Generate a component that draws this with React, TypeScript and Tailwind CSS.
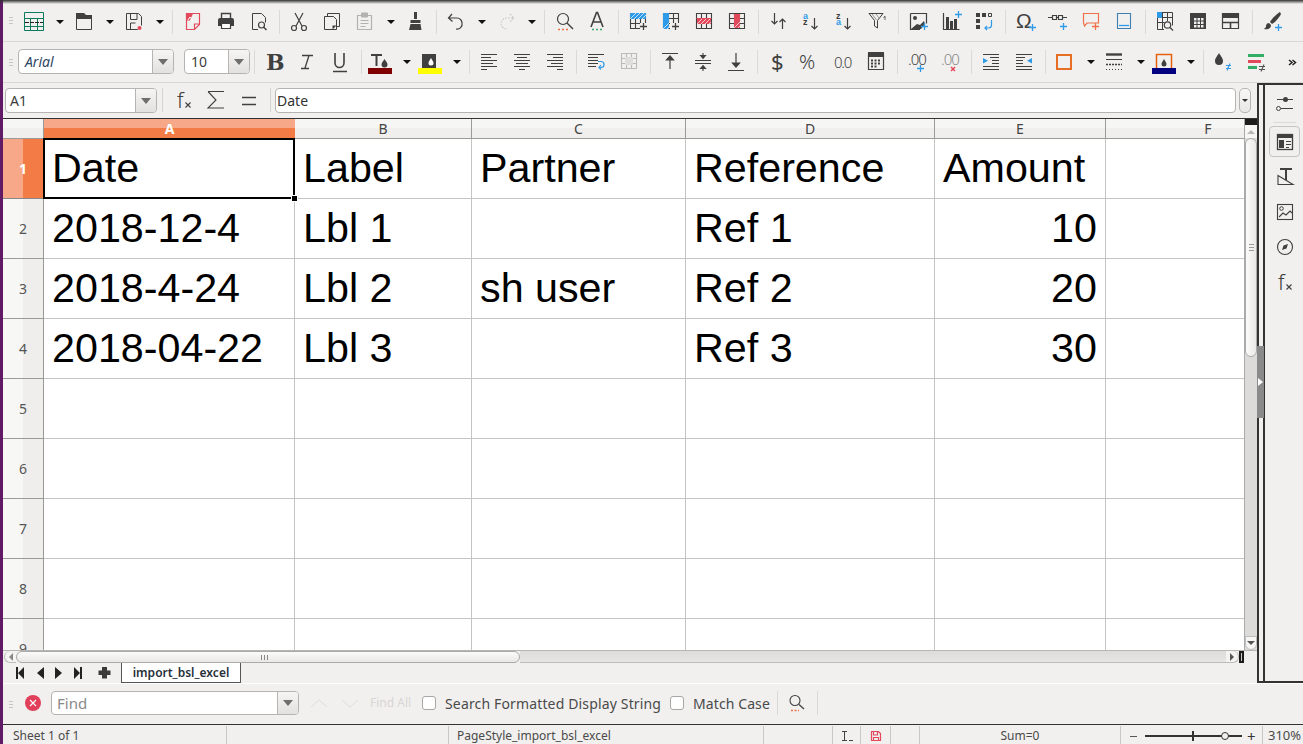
import React from "react";

const D = "#404040";
const BL = "#2f9ae8";
const RD = "#e2495a";
const OR = "#f0704a";

function Svg({ children, size = 24 }: { children: React.ReactNode; size?: number }) {
  return (
    <svg width={size} height={size} viewBox={`0 0 ${size} ${size}`} fill="none" stroke={D} strokeWidth="1" overflow="visible">
      {children}
    </svg>
  );
}

const Plus = ({ x, y, c = BL, r = 3 }: { x: number; y: number; c?: string; r?: number }) => (
  <path d={`M${x - r} ${y + 0.5}h${r * 2 + 1}M${x + 0.5} ${y - r}v${r * 2 + 1}`} stroke={c} strokeWidth="1.3" />
);

const Hatch = ({ x, y, w, h, c }: { x: number; y: number; w: number; h: number; c: string }) => {
  const n = Math.ceil((w + h) / 4);
  return (
    <svg x={x} y={y} width={w} height={h} viewBox={`0 0 ${w} ${h}`}>
      <rect width={w} height={h} fill={c} stroke="none" />
      {Array.from({ length: n }).map((_, i) => (
        <path key={i} d={`M${i * 4} ${h}l${h} ${-h}`} stroke="#fff" strokeWidth="1" opacity="0.7" />
      ))}
    </svg>
  );
};

const Cells = () => <path d="M3.5 3.5h15v15h-15zM3.5 8.5h15M3.5 13.5h15M8.5 3.5v15M13.5 3.5v15" stroke={D} strokeWidth="1.1" />;

const freezeCells = [
  [9, 8], [12.5, 8], [16, 8],
  [9, 11.5], [12.5, 11.5], [16, 11.5],
  [9, 15], [12.5, 15], [16, 15],
];

const icons: Record<string, React.ReactNode> = {
  new: (
    <g stroke="#0b7a5e" transform="translate(-1 0)">
      <path d="M2.5 2.5h19v18h-19zM2.5 8.5h19M2.5 16.5h19M8.5 8.5v12M15.5 8.5v12" />
      <path d="M3 12.5h18" stroke="#222" strokeDasharray="4 1" />
    </g>
  ),
  open: (
    <g transform="translate(-1 0)">
      <path d="M4.5 4.5v15h15V8.5" />
      <path d="M4 3h8l2 2h6v4H4z" fill={D} stroke="none" />
    </g>
  ),
  save: (
    <g transform="translate(-1 0)">
      <path d="M4.5 3.5h12l3 3v9M15.5 19.5h-11zM4.5 3.5v16" />
      <path d="M8.5 4v5.5h6.5V4M8.5 19v-6h5" />
      <circle cx="17.5" cy="18" r="2" fill={RD} stroke="none" />
    </g>
  ),
  pdf: (
    <g stroke={RD} transform="translate(-1 0)">
      <path d="M6.5 3.5h13v11l-5 5h-8zM14.5 19v-5h5" strokeWidth="1.2" />
      <path d="M7 3.5h6l-3 7H7z" fill={RD} stroke="none" />
      <path d="M8 10l2-3 3 4" stroke="#fff" />
    </g>
  ),
  print: (
    <g>
      <path d="M7.5 8V3.5h9V8" strokeWidth="1.4" />
      <path d="M6 8h12a2 2 0 0 1 2 2v6h-3v-3H7v3H4v-6a2 2 0 0 1 2-2z" fill={D} stroke="none" />
      <path d="M7.5 13.5h9v5h-9z" fill="#fff" strokeWidth="1.2" />
    </g>
  ),
  preview: (
    <g>
      <path d="M5.5 3.5h9l4 4v5M11 19.5H5.5v-16" />
      <circle cx="14.5" cy="15" r="3" strokeWidth="1.2" />
      <path d="M16.5 17l3 3" strokeWidth="1.4" />
    </g>
  ),
  cut: (
    <g strokeWidth="1.2" transform="translate(-1 0)">
      <path d="M8 3l7 13M16 3l-7 13" />
      <circle cx="7" cy="18" r="2.5" />
      <circle cx="17" cy="18" r="2.5" />
    </g>
  ),
  copy: (
    <g transform="translate(-1 0)">
      <path d="M7.5 6V3.5h12v13H17" />
      <path d="M4.5 6.5h9l3 3v10h-12z" fill="#f1f0ef" />
      <path d="M12.5 19.5l4-4h-4z" fill={D} stroke="none" />
    </g>
  ),
  paste: (
    <g stroke="#b4b2b0">
      <path d="M3.5 5.5h14v14h-14z" strokeWidth="1.2" />
      <path d="M7.5 3h6v4h-6z" fill="#b4b2b0" />
      <path d="M6.5 10.5h8M6.5 13.5h8M6.5 16.5h5" />
    </g>
  ),
  clone: (
    <g>
      <path d="M10 2h3v7h-3z" fill={D} stroke="none" />
      <path d="M6.5 10h10v3h-10z" fill={D} stroke="none" />
      <path d="M6.5 14h10l1 6H5z" fill={D} stroke="none" />
    </g>
  ),
  undo: <path d="M7 4L3.5 8l4 3.5M4 8h8a5 5 0 0 1 5 5 5 5 0 0 1-6 6" strokeWidth="1.2" />,
  redo: <path d="M15 4l4 4-4 3.5M18 8h-7a6 6 0 0 0-5 6 6 6 0 0 0 6 5" stroke="#cfcdcb" strokeWidth="1.2" strokeDasharray="2 1" />,
  find: (
    <g>
      <circle cx="10" cy="9" r="5.5" strokeWidth="1.2" />
      <path d="M14 13l6 6" strokeWidth="1.4" />
      <path d="M5 19.5h10" stroke={OR} strokeWidth="1.5" strokeDasharray="2 2" />
    </g>
  ),
  spell: (
    <g>
      <path d="M5 17L10.5 2.5h1L17 17M7 12h8" strokeWidth="1.6" />
      <path d="M6 19.5h10" stroke="#3aa76d" strokeWidth="1.6" strokeDasharray="2 2" />
    </g>
  ),
  rowIns: (
    <g>
      <Cells />
      <Hatch x={3} y={3} w={16} h={6} c={BL} />
      <path d="M13 13h7v7h-7z" fill="#f1f0ef" stroke="none" />
      <Plus x={16} y={16} c={D} />
    </g>
  ),
  colIns: (
    <g>
      <Cells />
      <Hatch x={3} y={3} w={6} h={16} c={BL} />
      <path d="M10 13h10v7H10z" fill="#f1f0ef" stroke="none" />
      <Plus x={15} y={16} c={D} />
    </g>
  ),
  rowDel: (
    <g>
      <Cells />
      <Hatch x={4} y={8} w={14} h={6} c={RD} />
      <path d="M3.5 8.5h15" stroke={RD} />
    </g>
  ),
  colDel: (
    <g>
      <Cells />
      <Hatch x={8} y={4} w={6} h={14} c={RD} />
    </g>
  ),
  sort: (
    <g strokeWidth="1.2">
      <path d="M7.5 3v11M4.5 11l3 3 3-3" />
      <path d="M15.5 19V9M12.5 12l3-3 3 3" />
    </g>
  ),
  asc: (
    <g>
      <text x="3" y="8.5" fontSize="9" fontWeight="700" fill={BL} stroke="none" fontFamily="Liberation Sans">a</text>
      <text x="3" y="15" fontSize="9" fontWeight="700" fill={D} stroke="none" fontFamily="Liberation Sans">z</text>
      <path d="M14.5 8v11M11.5 16l3 3 3-3" strokeWidth="1.2" />
    </g>
  ),
  desc: (
    <g>
      <text x="3" y="8.5" fontSize="9" fontWeight="700" fill={D} stroke="none" fontFamily="Liberation Sans">z</text>
      <text x="3" y="15" fontSize="9" fontWeight="700" fill={BL} stroke="none" fontFamily="Liberation Sans">a</text>
      <path d="M14.5 8v11M11.5 16l3 3 3-3" strokeWidth="1.2" />
    </g>
  ),
  filter: (
    <g>
      <path d="M3 3.5h14l-5.5 7V18l-3-2v-5.5z" />
      <path d="M6 4l4.5 6M10 4l3.5 4.5" stroke="#999" />
      <path d="M19 6v4M17.5 8L19 6" stroke="#666" />
    </g>
  ),
  image: (
    <g>
      <path d="M3.5 3.5h16v10M13 19.5H3.5v-16" strokeWidth="1.2" />
      <circle cx="8" cy="8" r="2" fill={D} stroke="none" />
      <path d="M4 19l6-5 3 1 4-4 1 3-4 5z" fill={D} stroke="none" />
      <Plus x={17} y={16} />
    </g>
  ),
  chart: (
    <g>
      <path d="M3.5 3v16.5h16" strokeWidth="1.2" />
      <path d="M6 7h3v12H6zM10 11h3v8h-3zM14 9h3v10h-3z" fill={D} stroke="none" />
      <Plus x={18} y={4} />
    </g>
  ),
  pivot: (
    <g>
      <path d="M3 3h4v4H3zM9 3h4v4H9zM3 9h4v4H3zM3 15h4v4H3z" fill={D} stroke="none" />
      <path d="M15.5 3.5h3v3h-3z" />
      <path d="M18.5 10v5a3 3 0 0 1-3 3H12M14 16l-2 2 2 2" stroke={BL} strokeWidth="1.2" />
    </g>
  ),
  omega: (
    <g>
      <text x="2" y="18" fontSize="21" fill={D} stroke="none" fontFamily="Liberation Sans">Ω</text>
      <Plus x={18} y={17} />
    </g>
  ),
  link: (
    <g>
      <path d="M1 7.5h4M16 7.5h4M5.5 5.5h4v4h-4zM11.5 5.5h4v4h-4zM9.5 7.5h2" strokeWidth="1.2" />
      <Plus x={16} y={16} />
    </g>
  ),
  comment: (
    <g>
      <path d="M3.5 3.5h15V13H7l-2.5 3-1-3z" stroke={OR} strokeWidth="1.2" />
      <Plus x={15} y={16} c={OR} />
    </g>
  ),
  headers: (
    <g>
      <path d="M4.5 3.5h13v15h-13z" stroke="#3c7fb0" strokeWidth="1.1" />
      <path d="M6 15.5h10" stroke={BL} strokeWidth="1.3" />
    </g>
  ),
  define: (
    <g>
      <path d="M3.5 2.5h15v13M10 19.5H3.5v-17M3.5 7.5h15M3.5 12.5h7M8.5 3v16M13.5 3v8" />
      <rect x="3" y="2" width="5" height="6" fill={BL} stroke="none" />
      <circle cx="13.5" cy="15" r="3.2" strokeWidth="1.2" />
      <path d="M16 17.5l3 3" strokeWidth="1.3" />
    </g>
  ),
  freeze: (
    <g transform="translate(-2 0)">
      <rect x="5" y="3" width="16" height="16" fill={D} stroke="none" />
      {freezeCells.map(([x, y], i) => (
        <rect key={i} x={x} y={y} width="2.5" height="2.5" fill="#f1f0ef" stroke="none" />
      ))}
    </g>
  ),
  split: (
    <g transform="translate(-1 0)">
      <path d="M3.5 3.5h16v15h-16z" strokeWidth="1.2" />
      <rect x="3" y="3" width="17" height="5" fill={D} stroke="none" />
      <path d="M3 12.5h17M11.5 12.5v6" strokeWidth="1.6" />
    </g>
  ),
  draw: (
    <g transform="translate(-1 0)">
      <path d="M20 2c-2 1-8 6-10 10l2 2c4-2 8-8 9-10z" fill={D} stroke="none" />
      <path d="M9 13c-3 0-3 3-3 4l-2 2c3 1 7 0 7-4z" fill={D} stroke="none" />
      <Plus x={18} y={17} />
    </g>
  ),
  bold: <text x="3" y="20" fontSize="22" fontWeight="700" fill={D} stroke="none" fontFamily="DejaVu Serif">B</text>,
  italic: <path d="M6 5.5h11M13 5.5L9 18M5 18.5h8" strokeWidth="1.3" />,
  under: <path d="M6 3v10a4.5 4.5 0 0 0 9 0V3M4 21.5h14" strokeWidth="1.6" />,
  fontColor: (
    <g>
      <path d="M1 4h11v2H7.5v10h-2V6H1z" fill={D} stroke="none" />
      <path d="M14.5 9c2 3 3 4 3 5.5a3 3 0 0 1-6 0c0-1.5 1-2.5 3-5.5z" fill={D} stroke="none" />
      <rect x="-2" y="18" width="24" height="6" fill="#800000" stroke="none" />
    </g>
  ),
  bgColor: (
    <g>
      <rect x="2" y="4" width="14" height="14" fill={D} stroke="none" />
      <path d="M11 8c1.5 2.5 2.5 3.5 2.5 5a2.5 2.5 0 0 1-5 0c0-1.5 1-2.5 2.5-5z" fill="#fff" stroke="none" />
      <rect x="-2" y="18" width="24" height="6" fill="#ffff00" stroke="none" />
    </g>
  ),
  left: <path d="M3 4.5h16M3 7.5h10M3 10.5h16M3 13.5h12M3 16.5h16M3 19.5h6" strokeWidth="1.1" />,
  center: <path d="M3 4.5h16M6 7.5h10M3 10.5h16M5 13.5h12M3 16.5h16M8 19.5h6" strokeWidth="1.1" />,
  right: <path d="M3 4.5h16M9 7.5h10M3 10.5h16M7 13.5h12M3 16.5h16M13 19.5h6" strokeWidth="1.1" />,
  wrap: (
    <g>
      <path d="M3 4.5h16M3 7.5h10M3 10.5h10M3 13.5h10M3 16.5h8" strokeWidth="1.1" />
      <path d="M13 11.5h3a2.8 2.8 0 0 1 0 6h-2M16 15l-2 2.500 2 2" stroke={BL} strokeWidth="1.2" />
    </g>
  ),
  merge: (
    <g stroke="#bdbbb9">
      <path d="M3.5 3.5h15v15h-15zM3.5 8.5h15M3.5 13.5h15M8.5 3.5v15M13.5 3.5v15" strokeWidth="1.1" />
      <rect x="7" y="7" width="8" height="8" fill="#e0dedc" stroke="none" />
    </g>
  ),
  top: <path d="M3 3.5h16M11 19V7M7.5 10L11 6l3.5 4z" fill={D} strokeWidth="1.2" />,
  vcenter: <path d="M3 10.5h16M3 13.5h16M11 3v5M11 16v5M8.5 5.5l2.5 3 2.5-3zM8.5 18.5l2.5-3 2.5 3z" fill={D} strokeWidth="1.1" />,
  bottom: <path d="M3 20.5h16M11 3v12M7.5 13l3.5 4 3.5-4z" fill={D} strokeWidth="1.2" />,
  dollar: <text x="5" y="20" fontSize="22" fill={D} stroke="none" fontFamily="Noto Sans">$</text>,
  percent: <text x="0" y="19" fontSize="20" fontWeight="300" fill={D} stroke="none" fontFamily="Noto Sans">%</text>,
  num: <text x="2" y="17.5" fontSize="15" fontWeight="300" fill={D} stroke="none" fontFamily="Noto Sans" letterSpacing="-1.2">0.0</text>,
  date: (
    <g transform="translate(-1 0)">
      <path d="M4.5 4.5h15v15h-15z" strokeWidth="1.2" />
      <rect x="4" y="2" width="16" height="5" fill={D} stroke="none" />
      <path d="M7 10.5h10M7 13.5h10M7 16.5h7" strokeWidth="2" strokeDasharray="2 1.5" />
    </g>
  ),
  decAdd: (
    <g>
      <text x="2" y="15" fontSize="15" fontWeight="300" fill={D} stroke="none" fontFamily="Noto Sans" letterSpacing="-1">.00</text>
      <Plus x={14} y={18} />
    </g>
  ),
  decDel: (
    <g>
      <text x="2" y="15" fontSize="15" fontWeight="300" fill="#888" stroke="none" fontFamily="Noto Sans" letterSpacing="-1">.00</text>
      <path d="M12 17l4 4M16 17l-4 4" stroke={RD} strokeWidth="1.5" />
    </g>
  ),
  indent: (
    <g>
      <path d="M3 4.5h16M10 7.5h9M12 10.5h7M12 13.5h7M3 16.5h16M3 19.5h16" strokeWidth="1.1" />
      <path d="M3 8v5.5l5-2.75z" fill={BL} stroke="none" />
    </g>
  ),
  outdent: (
    <g>
      <path d="M3 4.5h16M3 7.5h9M3 10.5h7M3 13.5h7M3 16.5h16M3 19.5h16" strokeWidth="1.1" />
      <path d="M19 8v5.5l-5-2.75z" fill={BL} stroke="none" />
    </g>
  ),
  border: <rect x="3" y="5" width="14" height="14" stroke="#e5600f" strokeWidth="1.8" />,
  style: (
    <g>
      <path d="M2 4.5h16" strokeWidth="2.4" />
      <path d="M2 9.5h16" strokeWidth="1" />
      <path d="M2 14.5h16" strokeWidth="1.3" strokeDasharray="2 1" />
      <path d="M2 19.5h16" strokeWidth="1" strokeDasharray="1 2" />
    </g>
  ),
  borderColor: (
    <g>
      <path d="M2.5 18V4.5h15V18" stroke="#e5600f" strokeWidth="1.5" />
      <path d="M10 9c1.5 2.5 2.5 3.5 2.5 5a2.5 2.5 0 0 1-5 0c0-1.5 1-2.5 2.5-5z" fill={D} stroke="none" />
      <rect x="-2" y="18" width="24" height="6" fill="#000080" stroke="none" />
    </g>
  ),
  cond: (
    <g>
      <path d="M7 3c2.5 4 4 5.5 4 8a4 4 0 0 1-8 0c0-2.5 1.5-4 4-8z" fill={D} stroke="none" />
      <path d="M14 15.5h5M14 18.5h5M18 13.5l-3 7" stroke={BL} strokeWidth="1.1" />
    </g>
  ),
  cond2: (
    <g>
      <rect x="3" y="4" width="16" height="3" fill="#33ad66" stroke="none" />
      <rect x="3" y="10" width="13" height="3" fill={RD} stroke="none" />
      <rect x="3" y="16" width="9" height="3" fill="#33ad66" stroke="none" />
      <path d="M14 16.5h6M14 19.5h6M19 14.5l-3 7" stroke="#555" strokeWidth="1.1" />
    </g>
  ),
  more: <path d="M1 10l3 2.5L1 15M4.5 10l3 2.5-3 2.5" stroke="#222" strokeWidth="1.5" />,
  search: (
    <g>
      <circle cx="11" cy="9.5" r="5" strokeWidth="1.1" />
      <path d="M15 13.5l5 4.5" strokeWidth="1.3" />
      <path d="M7 19.5h8" stroke={OR} strokeWidth="1.5" strokeDasharray="2 1.5" />
    </g>
  ),
  props: (
    <g>
      <path d="M4 7.5h16" />
      <circle cx="12.5" cy="7.5" r="2.5" fill={D} stroke="none" />
      <path d="M8 16.5h12" />
      <circle cx="5.5" cy="16.5" r="2" />
    </g>
  ),
  deck: (
    <g>
      <rect x="4.5" y="4.5" width="15" height="15" strokeWidth="1.3" />
      <rect x="4" y="4" width="16" height="4" fill={D} stroke="none" />
      <rect x="6" y="10" width="5" height="8" fill={D} stroke="none" />
      <path d="M13 11.5h5M13 14.5h5M13 17.5h3" />
    </g>
  ),
  styles: (
    <g>
      <path d="M5 20.5h15L5 11.5zM5 20.5v-9" strokeWidth="1.1" />
      <path d="M7 4h12v2H7zM12 5h2v11h-2z" fill={D} stroke="none" />
    </g>
  ),
  gallery: (
    <g>
      <rect x="4.5" y="4.5" width="15" height="15" strokeWidth="1.1" />
      <circle cx="8.5" cy="8.5" r="1.8" />
      <path d="M6 17l4-4 3 2 4-4 2 2" strokeWidth="1.1" />
    </g>
  ),
  nav: (
    <g>
      <circle cx="12" cy="12" r="7.5" strokeWidth="1.1" />
      <path d="M15 9l-4.5 1.5L9 15l4.5-1.5z" fill={D} stroke="none" />
    </g>
  ),
  fx: (
    <g>
      <text x="5" y="19.5" fontSize="21" fontWeight="300" fill={D} stroke="none" fontFamily="Noto Sans">f</text>
      <path d="M13.5 14.5l5 5M18.5 14.5l-5 5" strokeWidth="1.1" />
    </g>
  ),
  sum: <path d="M4 3.5h16M4 3.5l8 8.5-8 8h16" strokeWidth="1.1" />,
  equal: <path d="M5 9.5h14M5 16.5h14" strokeWidth="1.3" />,
};

function Ico({ n }: { n: string }) {
  return <Svg>{icons[n]}</Svg>;
}

function Btn({ n }: { n: string }) {
  return (
    <div className="w-[33px] pl-[5px] shrink-0">
      <Ico n={n} />
    </div>
  );
}

function Ar() {
  return (
    <div className="w-[17px] h-6 shrink-0 flex items-center justify-center">
      <div className="w-0 h-0 border-l-[4px] border-r-[4px] border-t-[4px] border-l-transparent border-r-transparent border-t-[#111]" />
    </div>
  );
}

function Sp() {
  return (
    <div className="w-[8px] h-6 shrink-0 flex justify-center">
      <div className="w-px h-full bg-[#dbd9d7]" />
    </div>
  );
}

function Grip() {
  return (
    <div className="absolute left-[6px] top-0 bottom-0 flex flex-col justify-center gap-[2px]">
      <div className="w-[4px] h-px bg-[#c8c6c4]" />
      <div className="w-[4px] h-px bg-[#c8c6c4]" />
      <div className="w-[4px] h-px bg-[#c8c6c4]" />
    </div>
  );
}

function Combo({ className, text, textClass }: { className: string; text: string; textClass: string }) {
  return (
    <div className={`flex bg-white border border-[#b6b4b2] rounded-[4px] overflow-hidden shrink-0 ${className}`}>
      <div className={`flex-1 flex items-center leading-none ${textClass}`}>{text}</div>
      <div className="w-[21px] border-l border-[#b6b4b2] bg-gradient-to-b from-[#f6f5f4] to-[#e3e1df] flex items-center justify-center">
        <div className="w-0 h-0 border-l-[5px] border-r-[5px] border-t-[6px] border-l-transparent border-r-transparent border-t-[#6e6e6e]" />
      </div>
    </div>
  );
}

const Toolbar1 = () => (
  <div className="relative h-[42px] shrink-0 border-b border-[#d9d7d5] flex items-start pt-[10px] pl-[15px]">
    <Grip />
    <Btn n="new" /><Ar />
    <Btn n="open" /><Ar />
    <Btn n="save" /><Ar />
    <Sp />
    <Btn n="pdf" /><Btn n="print" /><Btn n="preview" />
    <Sp />
    <Btn n="cut" /><Btn n="copy" /><Btn n="paste" /><Ar /><Btn n="clone" />
    <Sp />
    <Btn n="undo" /><Ar /><Btn n="redo" /><Ar />
    <Sp />
    <Btn n="find" /><Btn n="spell" />
    <Sp />
    <Btn n="rowIns" /><Btn n="colIns" /><Btn n="rowDel" /><Btn n="colDel" />
    <Sp />
    <Btn n="sort" /><Btn n="asc" /><Btn n="desc" /><Btn n="filter" />
    <Sp />
    <Btn n="image" /><Btn n="chart" /><Btn n="pivot" />
    <Sp />
    <Btn n="omega" /><Btn n="link" /><Btn n="comment" /><Btn n="headers" />
    <Sp />
    <Btn n="define" /><Btn n="freeze" /><Btn n="split" />
    <Sp />
    <Btn n="draw" />
  </div>
);

const Toolbar2 = () => (
  <div className="relative h-[41px] shrink-0 border-b border-[#d9d7d5] flex items-start pt-[8px] pl-[15px]">
    <Grip />
    <Combo className="w-[156px] h-[25px] -mt-[1px]" text="Arial" textClass="pl-[6px] text-[14px] italic text-[#2f4763]" />
    <Combo className="w-[66px] h-[25px] ml-[10px] -mt-[1px]" text="10" textClass="pl-[6px] text-[14px] text-[#3c3c3c]" />
    <div className="w-px" />
    <Sp />
    <Btn n="bold" /><Btn n="italic" /><Btn n="under" />
    <Sp />
    <Btn n="fontColor" /><Ar /><Btn n="bgColor" /><Ar />
    <Sp />
    <Btn n="left" /><Btn n="center" /><Btn n="right" />
    <Sp />
    <Btn n="wrap" /><Btn n="merge" />
    <Sp />
    <Btn n="top" /><Btn n="vcenter" /><Btn n="bottom" />
    <Sp />
    <Btn n="dollar" /><Btn n="percent" /><Btn n="num" /><Btn n="date" />
    <Sp />
    <Btn n="decAdd" /><Btn n="decDel" />
    <Sp />
    <Btn n="indent" /><Btn n="outdent" />
    <Sp />
    <Btn n="border" /><Ar /><Btn n="style" /><Ar /><Btn n="borderColor" /><Ar />
    <Sp />
    <Btn n="cond" /><Btn n="cond2" />
    <div className="ml-[15px]"><Ico n="more" /></div>
  </div>
);

const FormulaBar = () => (
  <div className="h-[36px] shrink-0 border-b border-[#333] flex items-start pt-[5px] pl-[2px]">
    <Combo className="w-[152px] h-[25px]" text="A1" textClass="pl-[4px] text-[14px] text-[#3c3c3c]" />
    <div className="w-[11px] flex justify-center h-6"><div className="w-px h-full bg-[#d5d3d1]" /></div>
    <div className="w-[32px] pl-[4px]"><Ico n="fx" /></div>
    <div className="w-[33px] pl-[4px]"><Ico n="sum" /></div>
    <div className="w-[33px] pl-[4px]"><Ico n="equal" /></div>
    <div className="w-[8px] flex justify-center h-6"><div className="w-px h-full bg-[#d5d3d1]" /></div>
    <div className="w-[961px] h-[25px] ml-[1px] bg-white border border-[#b6b4b2] rounded-[4px] flex items-center pl-[1px] text-[14px] text-[#333]">Date</div>
    <div className="w-[12px] h-[25px] ml-[3px] border border-[#b6b4b2] rounded-[5px] bg-gradient-to-b from-[#f8f7f6] to-[#e9e7e5] flex items-center justify-center">
      <div className="w-0 h-0 border-l-[3px] border-r-[3px] border-t-[3px] border-l-transparent border-r-transparent border-t-[#333]" />
    </div>
  </div>
);

const rows = [
  ["Date", "Label", "Partner", "Reference", "Amount"],
  ["2018-12-4", "Lbl 1", "", "Ref 1", "10"],
  ["2018-4-24", "Lbl 2", "sh user", "Ref 2", "20"],
  ["2018-04-22", "Lbl 3", "", "Ref 3", "30"],
  ["", "", "", "", ""],
  ["", "", "", "", ""],
  ["", "", "", "", ""],
  ["", "", "", "", ""],
  ["", "", "", "", ""],
];

const Sheet = () => (
  <div className="relative w-[1241px] h-[531px] overflow-hidden bg-white">
    <div className="grid grid-cols-[41px_251px_177px_214px_249px_171px_139px] grid-rows-[20px_repeat(9,60px)]">
      <div className="border-r border-b border-[#9a9a98] bg-gradient-to-b from-[#f6f6f4] from-50% to-[#f0efed] to-50%" />
      <div className="flex items-center justify-center text-[14px] font-bold text-white border-b border-[#777] bg-gradient-to-b from-[#f7a888] from-50% to-[#f37b45] to-50%">A</div>
      {["B", "C", "D", "E"].map((c) => (
        <div key={c} className="flex items-center justify-center text-[14px] text-[#444] border-r border-b border-[#9a9a98] bg-gradient-to-b from-[#f6f6f4] from-50% to-[#f0efed] to-50%">
          {c}
        </div>
      ))}
      <div className="flex items-center justify-center pl-[65px] text-[14px] text-[#444] border-b border-[#9a9a98] bg-gradient-to-b from-[#f6f6f4] from-50% to-[#f0efed] to-50%">F</div>
      {rows.map((r, i) => (
        <React.Fragment key={i}>
          <div
            className={
              i === 0
                ? "flex items-center justify-center text-[14px] font-bold text-white border-r border-b border-[#888] bg-gradient-to-r from-[#f7a888] from-50% to-[#f37b45] to-50%"
                : "flex items-center justify-center text-[14px] text-[#555] border-r border-b border-[#9a9a98] bg-gradient-to-r from-[#f7f7f5] from-50% to-[#efeeec] to-50%"
            }
          >
            {i + 1}
          </div>
          {r.map((v, j) => (
            <div
              key={j}
              className={`border-r border-b border-[#c4c4c4] px-[8px] text-[41.25px] leading-[59px] text-black whitespace-nowrap font-['Liberation_Sans',sans-serif] ${j === 4 && i > 0 ? "text-right" : ""}`}
            >
              {v}
            </div>
          ))}
          <div className="border-b border-[#c4c4c4]" />
        </React.Fragment>
      ))}
    </div>
    <div className="absolute left-[40px] top-[19px] w-[252px] h-[61px] border-2 border-black pointer-events-none" />
    <div className="absolute left-[289px] top-[77px] w-[5px] h-[5px] bg-black border border-white box-content -m-px" />
  </div>
);

const VScroll = () => (
  <div className="w-[13px] h-[531px] shrink-0 flex flex-col bg-[#dcdbd9] border-l border-[#aaa]">
    <div className="h-[6px] bg-[#1c1c1c] shrink-0" />
    <div className="h-[13px] shrink-0 bg-[#f7f6f5] flex items-center justify-center">
      <div className="w-0 h-0 border-l-[4px] border-r-[4px] border-b-[4px] border-l-transparent border-r-transparent border-b-[#b9b7b5]" />
    </div>
    <div className="h-[219px] shrink-0 rounded-[6px] border border-[#aaa] bg-gradient-to-r from-[#fbfbfa] to-[#e9e8e6] flex items-center justify-center">
      <div className="flex flex-col gap-[2px]">
        <div className="w-[5px] h-px bg-[#999]" />
        <div className="w-[5px] h-px bg-[#999]" />
        <div className="w-[5px] h-px bg-[#999]" />
      </div>
    </div>
    <div className="flex-1" />
    <div className="h-[14px] shrink-0 rounded-b-[6px] bg-[#f7f6f5] border border-[#bbb] flex items-center justify-center">
      <div className="w-0 h-0 border-l-[4px] border-r-[4px] border-t-[4px] border-l-transparent border-r-transparent border-t-[#555]" />
    </div>
  </div>
);

const HScroll = () => (
  <div className="h-[13px] shrink-0 flex items-stretch pl-px pr-[13px] border-t border-[#b8b6b4]">
    <div className="w-[12px] bg-[#f4f3f2] rounded-l-[6px] border-l border-b border-[#bbb] flex items-center justify-center">
      <div className="w-0 h-0 border-t-[4px] border-b-[4px] border-r-[4px] border-t-transparent border-b-transparent border-r-[#888]" />
    </div>
    <div className="w-[504px] rounded-[6px] border border-[#aaa] bg-gradient-to-b from-[#fbfbfa] to-[#e9e8e6] flex items-center justify-center gap-[2px] pr-[8px]">
      <div className="w-px h-[5px] bg-[#888]" />
      <div className="w-px h-[5px] bg-[#888]" />
      <div className="w-px h-[5px] bg-[#888]" />
    </div>
    <div className="flex-1 bg-gradient-to-b from-[#dddcda] to-[#e6e5e3] border-b border-[#bbb]" />
    <div className="w-[13px] bg-[#f4f3f2] rounded-r-[6px] border-r border-b border-[#bbb] flex items-center justify-center">
      <div className="w-0 h-0 border-t-[4px] border-b-[4px] border-l-[4px] border-t-transparent border-b-transparent border-l-[#555]" />
    </div>
    <div className="w-[5px] bg-[#1c1c1c] flex justify-center items-center">
      <div className="w-px h-[8px] bg-[#ccc]" />
    </div>
  </div>
);

const TabBar = () => (
  <div className="h-[21px] shrink-0 flex items-start pl-[13px]">
    <svg width="100" height="20" viewBox="0 0 100 20" fill="#222" className="shrink-0 mt-[1px]">
      <path d="M0 3h2v12H0zM8 3v12L2 9zM28 3v12l-7-6zM39 3v12l7-6zM58 3v12l6-6zM64 3h2v12h-2z" />
      <path d="M86 3h5v3.5h3.5V11H91v3.5h-5V11h-3.5V6.5H86z" fill="#3a3a3a" />
    </svg>
    <div className="ml-[5px] w-[120px] h-[20px] bg-white border border-t-0 border-[#555] flex items-center justify-center text-[12px] font-semibold text-[#27303a] leading-none">
      import_bsl_excel
    </div>
  </div>
);

const Check = () => <div className="w-[14px] h-[14px] shrink-0 bg-white border border-[#a8a6a4] rounded-[3px]" />;

const FindBar = () => (
  <div className="relative h-[41px] shrink-0 border-t border-white flex items-center pb-[2px] pl-[22px] text-[14px] text-[#4a4a4a]">
    <Grip />
    <svg width="16" height="16" viewBox="0 0 16 16" className="shrink-0">
      <circle cx="8" cy="8" r="8" fill="#e2405a" />
      <path d="M5 5l6 6M11 5l-6 6" stroke="#fff" strokeWidth="1.2" />
    </svg>
    <div className="ml-[10px]">
      <Combo className="w-[248px] h-[24px]" text="Find" textClass="pl-[5px] text-[15px] text-[#8a8a8a]" />
    </div>
    <svg width="70" height="24" viewBox="0 0 70 24" fill="none" stroke="#e0dedc" className="shrink-0">
      <path d="M12 16l8-7 8 7M43 9l8 7 8-7" />
    </svg>
    <span className="text-[#d8d6d3] text-[12px] ml-[1px] w-[52px] shrink-0">Find All</span>
    <Check />
    <span className="ml-[9px] w-[225px] shrink-0 text-[14px] tracking-[0.15px] whitespace-nowrap">Search Formatted Display String</span>
    <Check />
    <span className="ml-[9px] w-[80px] shrink-0 tracking-[0.1px] whitespace-nowrap">Match Case</span>
    <div className="w-px h-6 bg-[#dbd9d7] ml-[4px]" />
    <div className="w-[39px] pl-[6px] shrink-0"><Ico n="search" /></div>
    <div className="w-px h-6 bg-[#dbd9d7]" />
  </div>
);

const Cell = ({ className, children }: { className: string; children?: React.ReactNode }) => (
  <div className={`h-[18px] mt-px pt-[2px] border-r border-[#c9c7c5] shrink-0 flex items-center ${className}`}>{children}</div>
);

const StatusBar = () => (
  <div className="h-[20px] shrink-0 border-t border-[#333] flex text-[12px] text-[#4a4a4a] leading-none whitespace-nowrap">
    <Cell className="w-[224px] pl-[10px]">Sheet 1 of 1</Cell>
    <Cell className="w-[222px]" />
    <Cell className="w-[315px] pl-[8px]">PageStyle_import_bsl_excel</Cell>
    <Cell className="w-[69px]" />
    <Cell className="w-[28px] justify-center">
      <svg width="14" height="14" viewBox="0 0 14 14" fill="none" stroke="#444">
        <path d="M2 2.5h5M2 11.5h5M4.5 2.5v9M9 11.5h4" />
      </svg>
    </Cell>
    <Cell className="w-[30px] justify-center">
      <svg width="12" height="12" viewBox="0 0 12 12" fill="none" stroke={RD} strokeWidth="1.2">
        <path d="M1.5 1.5h7l2 2v7h-9zM3.5 2v3h4V2M3.5 10.5v-3h5v3" />
      </svg>
    </Cell>
    <Cell className="w-[29px]" />
    <Cell className="w-[201px] justify-center">Sum=0</Cell>
    <Cell className="w-[142px] relative">
      <span className="ml-[9px] w-[7px] h-px bg-[#555]" />
      <div className="relative ml-[8px] w-[97px] h-[2px] bg-[#333]">
        <div className="absolute left-[47px] -top-[4px] w-[2px] h-[10px] bg-[#333]" />
        <div className="absolute left-[76px] -top-[3px] w-[8px] h-[8px] rounded-full bg-[#f0efee] border border-[#333]" />
      </div>
      <span className="ml-[5px] text-[15px] text-[#333]">+</span>
    </Cell>
    <div className="pl-[5px] pt-px flex items-center text-[13px]">310%</div>
  </div>
);

const Sidebar = () => (
  <div className="flex-1 border-l-2 border-[#333] pl-px flex flex-col items-center">
    <div className="mt-[7px]"><Ico n="props" /></div>
    <div className="mt-[6px] w-[23px] h-px bg-[#dcdad8]" />
    <div className="mt-[3px] w-[31px] h-[31px] border border-[#c6c4c2] rounded-[4px] flex items-center justify-center"><Ico n="deck" /></div>
    <div className="mt-[7px]"><Ico n="styles" /></div>
    <div className="mt-[12px]"><Ico n="gallery" /></div>
    <div className="mt-[11px]"><Ico n="nav" /></div>
    <div className="mt-[11px]"><Ico n="fx" /></div>
  </div>
);

export default function App() {
  return (
    <div className="relative w-[1303px] h-[744px] overflow-hidden flex bg-[#f1f0ef] font-['Noto_Sans',sans-serif]">
      <div className="w-[3px] shrink-0 bg-[#611a66]" />
      <div className="flex-1 flex flex-col min-w-0">
        <Toolbar1 />
        <Toolbar2 />
        <div className="flex h-[600px] shrink-0">
          <div className="w-[1254px] shrink-0 flex flex-col">
            <FormulaBar />
            <div className="flex">
              <Sheet />
              <VScroll />
            </div>
            <HScroll />
            <TabBar />
          </div>
          <div className="relative flex-1 flex border-t-2 border-b-2 border-[#333]">
            <div className="w-[2px] bg-[#333] shrink-0" />
            <div className="w-[4px] shrink-0" />
            <Sidebar />
            <div className="absolute left-0 top-[261px] w-[7px] h-[72px] bg-[#8a8a8a] flex items-center justify-center">
              <div className="w-0 h-0 border-t-[4px] border-b-[4px] border-l-[5px] border-t-transparent border-b-transparent border-l-white" />
            </div>
          </div>
        </div>
        <FindBar />
        <StatusBar />
      </div>
      <div className="absolute top-0 left-0 right-0 h-[4px] bg-gradient-to-b from-[#333] to-transparent" />
    </div>
  );
}
